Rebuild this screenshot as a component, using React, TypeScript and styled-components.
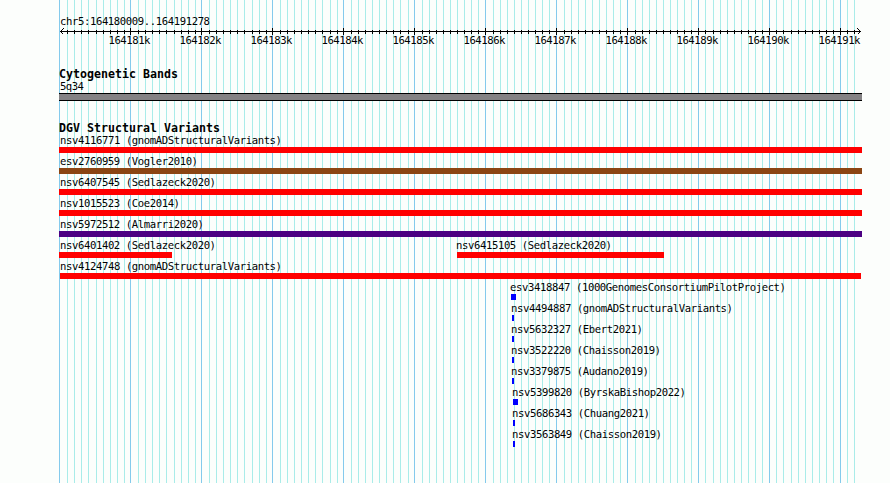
import React from 'react';
import styled, { createGlobalStyle } from 'styled-components';

interface Variant {
  name: string;
  start: number;
  width: number;
  color?: string;
  indent?: number;
}

const majors = Array.from({ length: 11 }, (_, i) => 130 + i * 71);
const minors = Array.from({ length: 113 }, (_, k) => k)
  .filter((k) => k > 0 && k % 10 !== 0)
  .map((k) => 59 + Math.floor(1.57 + k * 7.092));

const rows: Variant[][] = [
  [{ name: 'nsv4116771 (gnomADStructuralVariants)', start: 59, width: 803 }],
  [{ name: 'esv2760959 (Vogler2010)', start: 59, width: 803, color: '#8b4513' }],
  [{ name: 'nsv6407545 (Sedlazeck2020)', start: 59, width: 803 }],
  [{ name: 'nsv1015523 (Coe2014)', start: 59, width: 803 }],
  [{ name: 'nsv5972512 (Almarri2020)', start: 59, width: 803, color: '#4b0082' }],
  [
    { name: 'nsv6401402 (Sedlazeck2020)', start: 59, width: 113 },
    { name: 'nsv6415105 (Sedlazeck2020)', start: 457, width: 207, indent: -0.8 },
  ],
  [{ name: 'nsv4124748 (gnomADStructuralVariants)', start: 60, width: 801, indent: 0.2 }],
  [{ name: 'esv3418847 (1000GenomesConsortiumPilotProject)', start: 511, width: 5, color: '#00f', indent: -0.8 }],
  [{ name: 'nsv4494887 (gnomADStructuralVariants)', start: 512, width: 2, color: '#00f', indent: -0.8 }],
  [{ name: 'nsv5632327 (Ebert2021)', start: 512, width: 2, color: '#00f', indent: -0.8 }],
  [{ name: 'nsv3522220 (Chaisson2019)', start: 512, width: 2, color: '#00f', indent: -0.8 }],
  [{ name: 'nsv3379875 (Audano2019)', start: 512, width: 2, color: '#00f', indent: -0.8 }],
  [{ name: 'nsv5399820 (ByrskaBishop2022)', start: 513, width: 5, color: '#00f', indent: -0.8 }],
  [{ name: 'nsv5686343 (Chuang2021)', start: 513, width: 2, color: '#00f', indent: -0.8 }],
  [{ name: 'nsv3563849 (Chaisson2019)', start: 513, width: 2, color: '#00f', indent: -0.8 }],
];

const GlobalStyle = createGlobalStyle`
  body {
    margin: 0;
    background: #fcfefc;
  }
`;

const Browser = styled.main`
  position: relative;
  width: 890px;
  height: 483px;
  overflow: hidden;
  background: #fcfefc;
  color: #000;
  font-family: 'DejaVu Sans Mono', monospace;
`;

const Grid = styled.svg`
  position: absolute;
  inset: 0;
`;

const Content = styled.div`
  position: relative;
  display: flex;
  flex-direction: column;
  padding: 15px 0 0 59px;
`;

const Label = styled.svg<{ $indent?: number }>`
  display: block;
  height: 12px;
  margin-left: ${({ $indent = 1.2 }) => $indent}px;
  overflow: visible;
  font-size: 10.6px;
`;

const Title = styled(Label)`
  font-size: 11.6px;
  font-weight: bold;
`;

const Ruler = styled.svg`
  display: block;
  width: 831px;
  height: 20px;
  margin-left: -59px;
  overflow: visible;
  font-size: 10.6px;
`;

const Section = styled.section<{ $gap: number }>`
  display: flex;
  flex-direction: column;
  margin-top: ${({ $gap }) => $gap}px;
`;

const Band = styled.div`
  box-sizing: border-box;
  width: 803px;
  height: 8px;
  margin-top: 1px;
  border: solid #000;
  border-width: 1px 0;
  background: #848284;
`;

const Row = styled.div`
  display: grid;
  height: 21px;
`;

const Feature = styled.div<{ $start: number }>`
  grid-area: 1 / 1;
  margin-left: ${({ $start }) => $start - 59}px;
`;

const Bar = styled.div<{ $width: number; $color: string }>`
  width: ${({ $width }) => $width}px;
  height: 6px;
  margin-top: 1px;
  background: ${({ $color }) => $color};
`;

interface TextProps {
  children: string;
  indent?: number;
}

const Text: React.FC<TextProps> = ({ children, indent }) => (
  <Label $indent={indent}>
    <text x="0" y="10" textLength={children.length * 6} lengthAdjust="spacing">
      {children}
    </text>
  </Label>
);

const Heading: React.FC<TextProps> = ({ children }) => (
  <Title $indent={0}>
    <text x="0" y="10" textLength={children.length * 7} lengthAdjust="spacing">
      {children}
    </text>
  </Title>
);

const App: React.FC = () => {
  return (
    <>
      <GlobalStyle />
      <Browser>
        <Grid width="890" height="483" shapeRendering="crispEdges">
          {minors.map((x) => (
            <rect key={x} x={x} y="0" width="1" height="483" fill="#a9ece9" />
          ))}
          {[59, ...majors].map((x) => (
            <rect key={x} x={x} y="0" width="1" height="483" fill="#84caec" />
          ))}
        </Grid>
        <Content>
          <Text>chr5:164180009..164191278</Text>
          <Ruler>
            <g stroke="#000" fill="none" shapeRendering="crispEdges">
              <path d="M60 4.5H861" />
              {minors.map((x) => (
                <path key={x} d={`M${x + 0.5} 3v4`} />
              ))}
              {majors.map((x) => (
                <path key={x} d={`M${x + 0.5} 1v7`} />
              ))}
              <path d="M63.5 1.5L60.5 4.5L63.5 7.5M857.5 1.5L860.5 4.5L857.5 7.5" />
            </g>
            {majors.map((x, i) => (
              <text key={x} x={x - 21.5} y="17" textLength="42" lengthAdjust="spacing">
                {`${164181 + i}k`}
              </text>
            ))}
          </Ruler>
          <Section $gap={21}>
            <Heading>Cytogenetic Bands</Heading>
            <Text>5q34</Text>
            <Band />
          </Section>
          <Section $gap={21}>
            <Heading>DGV Structural Variants</Heading>
            {rows.map((row) => (
              <Row key={row[0].name}>
                {row.map(({ name, start, width, color = 'red', indent }) => (
                  <Feature key={name} $start={start}>
                    <Text indent={indent}>{name}</Text>
                    <Bar $width={width} $color={color} />
                  </Feature>
                ))}
              </Row>
            ))}
          </Section>
        </Content>
      </Browser>
    </>
  );
};

export default App;
